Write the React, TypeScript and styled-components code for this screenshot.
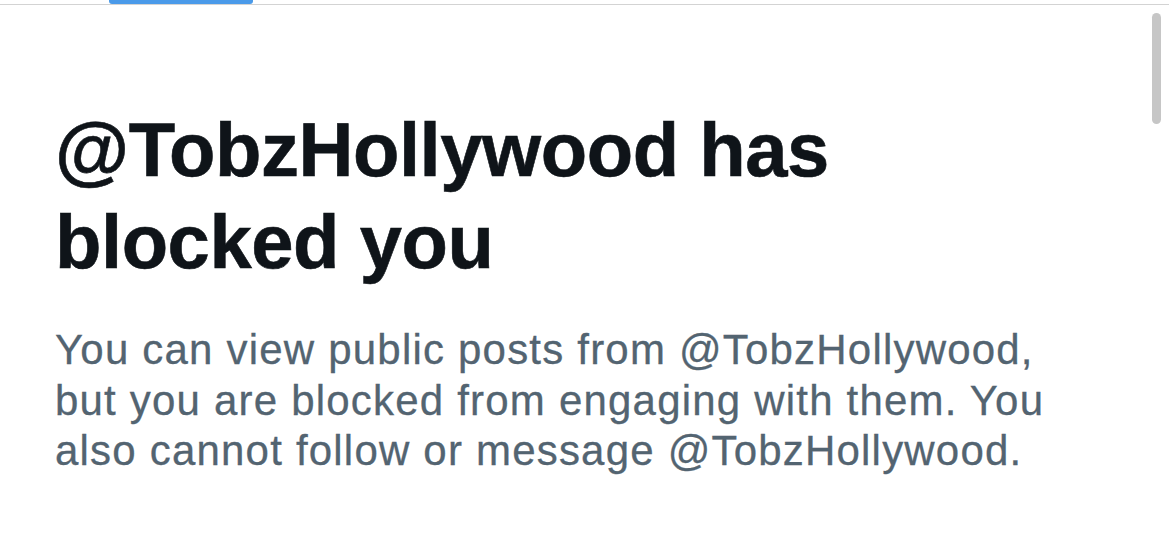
import React from "react";
import styled, { createGlobalStyle } from "styled-components";

const Global = createGlobalStyle`
  html, body { margin: 0; padding: 0; background: #ffffff; }
  body { font-family: "Liberation Sans", Arial, sans-serif; overflow: hidden; }
`;

const Page = styled.div`
  position: relative;
  width: 1169px;
  height: 548px;
  background: #ffffff;
  overflow: hidden;
`;

const TabBar = styled.div`
  height: 4px;
  border-bottom: 1px solid #d3d3d3;
  display: flex;
  padding-left: 109px;
`;

const Indicator = styled.div`
  width: 144px;
  height: 4px;
  background: #4a9ae9;
  border-radius: 0 0 3px 3px;
`;

const Content = styled.div`
  padding: 99px 0 0 55px;
  width: 1020px;
  display: flex;
  flex-direction: column;
  gap: 37px;
`;

const Heading = styled.h1`
  margin: 0;
  font-family: "Liberation Sans", Arial, sans-serif;
  font-weight: 700;
  font-size: 76px;
  line-height: 92px;
  letter-spacing: -0.45px;
  color: #0f1419;
  -webkit-text-stroke: 0.6px #0f1419;
`;

const Body = styled.p`
  margin: 0;
  font-family: "Liberation Sans", Arial, sans-serif;
  font-weight: 400;
  font-size: 42px;
  line-height: 50.5px;
  letter-spacing: 1.2px;
  color: #536471;
  -webkit-text-stroke: 0.3px #536471;
`;

const ScrollThumb = styled.div`
  position: absolute;
  top: 13px;
  left: 1152px;
  width: 9px;
  height: 111px;
  border-radius: 5px;
  background: #c6c6c6;
`;

export default function App() {
  return (
    <>
      <Global />
      <Page>
        <TabBar>
          <Indicator />
        </TabBar>
        <Content>
          <Heading>@TobzHollywood has blocked you</Heading>
          <Body>
            You can view public posts from @TobzHollywood, but you are blocked
            from engaging with them. You also cannot follow or message
            @TobzHollywood.
          </Body>
        </Content>
        <ScrollThumb />
      </Page>
    </>
  );
}
